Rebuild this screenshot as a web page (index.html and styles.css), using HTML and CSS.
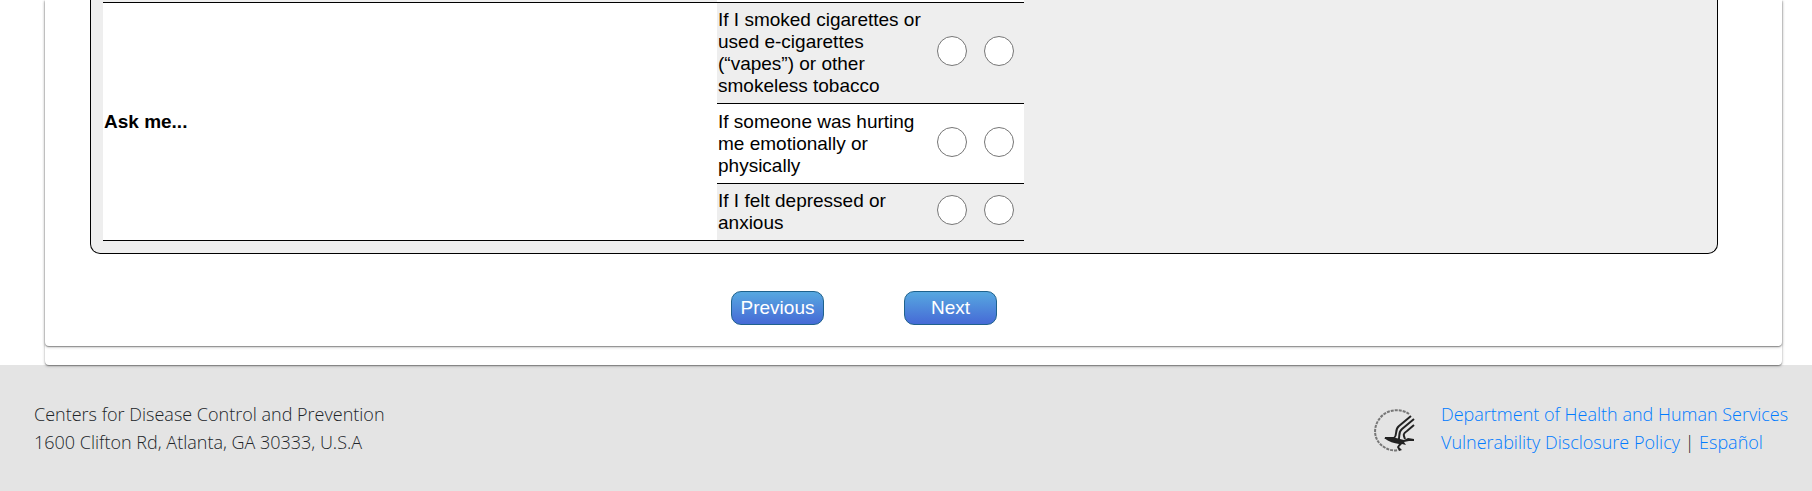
FILE: index.html
```html
<!DOCTYPE html>
<html lang="en">
<head>
    <meta charset="utf-8">
    <title>Questionnaire</title>
    <link rel="stylesheet" href="styles.css">
</head>
<body>
    <div class="page">
        <main class="card">
            <form class="card form">
                <div class="panel">
                    <table class="questions">
                        <tbody>
                            <tr class="spacer odd">
                                <td class="group-end"></td>
                                <td class="item"></td>
                                <td class="choice"></td>
                                <td class="choice"></td>
                            </tr>
                            <tr class="even">
                                <th class="group" rowspan="3" scope="rowgroup">Ask me...</th>
                                <td class="item" id="q-smoke">If I smoked cigarettes or used e-cigarettes (“vapes”) or other smokeless tobacco</td>
                                <td class="choice"><input type="radio" name="smoke" value="no" aria-labelledby="q-smoke"></td>
                                <td class="choice"><input type="radio" name="smoke" value="yes" aria-labelledby="q-smoke"></td>
                            </tr>
                            <tr class="odd">
                                <td class="item" id="q-hurt">If someone was hurting me emotionally or physically</td>
                                <td class="choice"><input type="radio" name="hurt" value="no" aria-labelledby="q-hurt"></td>
                                <td class="choice"><input type="radio" name="hurt" value="yes" aria-labelledby="q-hurt"></td>
                            </tr>
                            <tr class="even">
                                <td class="item" id="q-depressed">If I felt depressed or anxious</td>
                                <td class="choice"><input type="radio" name="depressed" value="no" aria-labelledby="q-depressed"></td>
                                <td class="choice"><input type="radio" name="depressed" value="yes" aria-labelledby="q-depressed"></td>
                            </tr>
                        </tbody>
                    </table>
                </div>
                <div class="buttons">
                    <button type="button">Previous</button>
                    <button type="submit">Next</button>
                </div>
            </form>
        </main>
    </div>

    <footer>
        <address>
            Centers for Disease Control and Prevention<br>
            1600 Clifton Rd, Atlanta, GA 30333, U.S.A
        </address>
        <div class="hhs">
            <svg class="logo" viewBox="0 0 44 44" aria-hidden="true">
                <path class="ring" d="M36 6 C28 0 14 1 7 10 C-1 20 1 33 11 39 C15 42 20 43 25 42"/>
                <path class="wing" d="M38 8 L26 18 C21 22 25 27 21 30 L12 30 M41 11 L29 21 C24 25 28 29 25 33 M41 17 L34 23 C29 26 31 28 32 31"/>
                <path class="body" d="M11 30 C16 29 20 29 23 30 L31 32 L35 30 L41 31 L41 33 L36 33 L31 34 L33 37 L29 36 L26 39 L29 42 L26 43 L24 39 L26 36 C21 35 16 34 11 30 Z"/>
            </svg>
            <div class="links">
                <a href="#">Department of Health and Human Services</a><br>
                <a href="#">Vulnerability Disclosure Policy</a> | <a href="#">Español</a>
            </div>
        </div>
    </footer>
</body>
</html>
```

FILE: styles.css
```css
* {
    box-sizing: border-box;
}

body {
    margin: 0;
    background-color: #fff;
    color: #000;
    font-family: "Liberation Sans", Arial, sans-serif;
    font-size: 19px;
    line-height: 22px;
}

.page {
    padding: 0 30px 0 45px;
}

.card {
    background-color: #fff;
    border-radius: 0 0 4px 4px;
    box-shadow: 0 1px 1px rgba(0, 0, 0, 0.3), 0 1px 3px rgba(0, 0, 0, 0.3);
}

main {
    position: relative;
    padding-bottom: 19px;
}

.form {
    padding: 0 64px 21px 45px;
}

.panel {
    padding: 0 12px 12px;
    background-color: #eee;
    border: 1px solid #000;
    border-top: none;
    border-radius: 0 0 10px 10px;
}

/* question grid */
.questions {
    width: 921px;
    max-width: 100%;
    border-collapse: separate;
    border-spacing: 0;
    table-layout: fixed;
}

.questions th,
.questions td {
    padding: 6px 1px;
    border-bottom: 1px solid #000;
    text-align: left;
    vertical-align: middle;
}

.questions .odd .item {
    padding-top: 7px;
}

.questions .spacer td,
.questions .spacer .item {
    height: 3px;
    padding: 0;
}

.questions .group,
.group-end {
    width: 614px;
}

.group,
.odd .item,
.odd .choice {
    background-color: #fff;
}

.questions .choice {
    width: 47px;
    padding: 4px 4px 8px 0;
    text-align: center;
}

.questions .spacer .choice {
    padding: 0;
}

.questions input {
    display: block;
    appearance: none;
    width: 30px;
    height: 30px;
    margin: 0 auto;
    background-color: #fff;
    border: 1px solid #767676;
    border-radius: 50%;
}

.questions input:checked {
    background-color: #466ad6;
}

.buttons {
    display: flex;
    justify-content: center;
    gap: 80px;
    padding: 37px 80px 0 0;
}

button {
    width: 93px;
    height: 34px;
    padding: 0;
    border: 1px solid #1f628d;
    border-radius: 10px;
    background-image: linear-gradient(#57a8e0, #466ad6);
    color: #fff;
    font-family: inherit;
    font-size: 19px;
    cursor: pointer;
}

/* footer */
footer {
    display: flex;
    justify-content: space-between;
    padding: 35px 18px 35px 34px;
    background-color: #e4e4e4;
    color: #212529;
    font-family: "Open Sans", "Noto Sans", sans-serif;
    font-size: 18px;
    font-weight: 300;
    line-height: 28px;
}

address {
    font-style: normal;
}

.hhs {
    display: flex;
    gap: 24px;
}

.links {
    min-width: 353px;
}

.logo {
    width: 44px;
    height: 44px;
    margin-top: 8px;
    fill: none;
    stroke: #222;
}

.ring {
    stroke: #777;
    stroke-width: 2;
    stroke-dasharray: 3 1;
}

.wing {
    stroke-width: 2;
}

.body {
    fill: #222;
    stroke: none;
}

a {
    color: #007bff;
    text-decoration: none;
}
```
